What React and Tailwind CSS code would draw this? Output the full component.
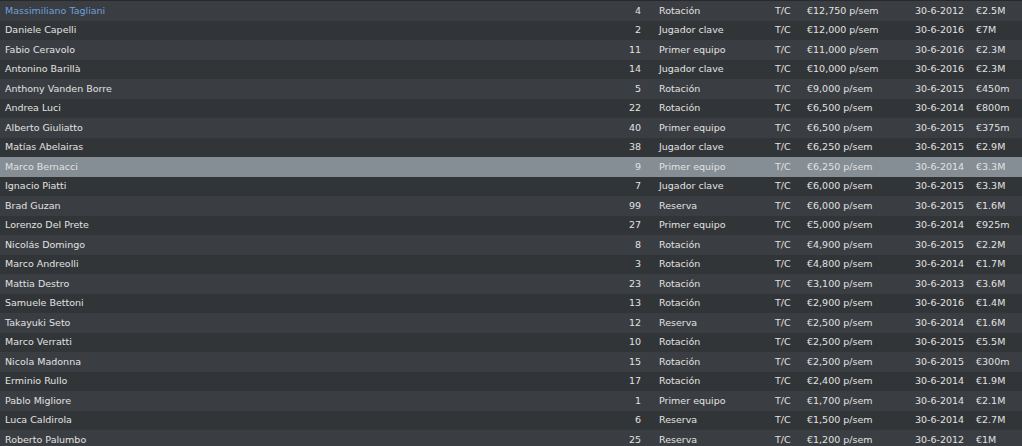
import React from 'react';

const players = [
  ['Massimiliano Tagliani', 4, 'Rotación', '€12,750 p/sem', '30-6-2012', '€2.5M'],
  ['Daniele Capelli', 2, 'Jugador clave', '€12,000 p/sem', '30-6-2016', '€7M'],
  ['Fabio Ceravolo', 11, 'Primer equipo', '€11,000 p/sem', '30-6-2016', '€2.3M'],
  ['Antonino Barillà', 14, 'Jugador clave', '€10,000 p/sem', '30-6-2016', '€2.3M'],
  ['Anthony Vanden Borre', 5, 'Rotación', '€9,000 p/sem', '30-6-2015', '€450m'],
  ['Andrea Luci', 22, 'Rotación', '€6,500 p/sem', '30-6-2014', '€800m'],
  ['Alberto Giuliatto', 40, 'Primer equipo', '€6,500 p/sem', '30-6-2015', '€375m'],
  ['Matías Abelairas', 38, 'Jugador clave', '€6,250 p/sem', '30-6-2015', '€2.9M'],
  ['Marco Bernacci', 9, 'Primer equipo', '€6,250 p/sem', '30-6-2014', '€3.3M'],
  ['Ignacio Piatti', 7, 'Jugador clave', '€6,000 p/sem', '30-6-2015', '€3.3M'],
  ['Brad Guzan', 99, 'Reserva', '€6,000 p/sem', '30-6-2015', '€1.6M'],
  ['Lorenzo Del Prete', 27, 'Primer equipo', '€5,000 p/sem', '30-6-2014', '€925m'],
  ['Nicolás Domingo', 8, 'Rotación', '€4,900 p/sem', '30-6-2015', '€2.2M'],
  ['Marco Andreolli', 3, 'Rotación', '€4,800 p/sem', '30-6-2014', '€1.7M'],
  ['Mattia Destro', 23, 'Rotación', '€3,100 p/sem', '30-6-2013', '€3.6M'],
  ['Samuele Bettoni', 13, 'Rotación', '€2,900 p/sem', '30-6-2016', '€1.4M'],
  ['Takayuki Seto', 12, 'Reserva', '€2,500 p/sem', '30-6-2014', '€1.6M'],
  ['Marco Verratti', 10, 'Rotación', '€2,500 p/sem', '30-6-2015', '€5.5M'],
  ['Nicola Madonna', 15, 'Rotación', '€2,500 p/sem', '30-6-2015', '€300m'],
  ['Erminio Rullo', 17, 'Rotación', '€2,400 p/sem', '30-6-2014', '€1.9M'],
  ['Pablo Migliore', 1, 'Primer equipo', '€1,700 p/sem', '30-6-2014', '€2.1M'],
  ['Luca Caldirola', 6, 'Reserva', '€1,500 p/sem', '30-6-2014', '€2.7M'],
  ['Roberto Palumbo', 25, 'Reserva', '€1,200 p/sem', '30-6-2012', '€1M'],
];

const Row = ({ p, i }) => {
  const [name, num, role, wage, date, value] = p;
  const selected = name === 'Marco Bernacci';
  const bg = selected ? 'bg-[#858e95]' : i % 2 === 0 ? 'bg-[#3a3d41]' : 'bg-[#323538]';
  return (
    <div className={`flex items-center h-[19.5px] ${bg}`}>
      <span className={`w-[600px] pl-[5px] ${i === 0 ? 'text-[#6f9fdc]' : ''}`}>{name}</span>
      <span className="w-[41px] text-right">{num}</span>
      <span className="w-[134px] pl-[18px]">{role}</span>
      <span className="w-[32px]">T/C</span>
      <span className="w-[108px]">{wage}</span>
      <span className="w-[61px]">{date}</span>
      <span>{value}</span>
    </div>
  );
};

const App = () => {
  return (
    <div
      className="w-[1022px] h-[446px] overflow-hidden bg-[#323538] border-t border-[#27292c] text-[#e2e2e2] text-[9.5px]"
      style={{ fontFamily: '"DejaVu Sans", Verdana, sans-serif' }}
    >
      {players.map((p, i) => (
        <Row key={p[0]} p={p} i={i} />
      ))}
    </div>
  );
};

export default App;
